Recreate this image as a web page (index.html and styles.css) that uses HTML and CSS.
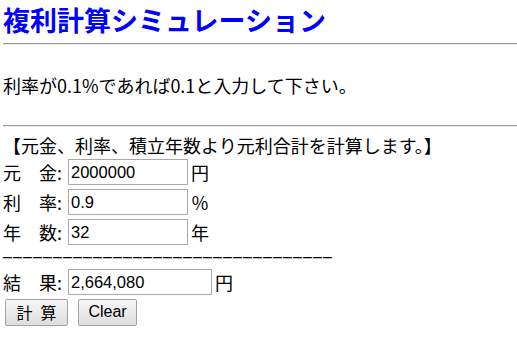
FILE: index.html
```html
<!DOCTYPE html>
<html lang="ja">

<head>
    <meta charset="UTF-8">
    <title>複利計算シミュレーション</title>
    <link rel="stylesheet" href="styles.css">
</head>

<body>

    <h2 class="title">複利計算シミュレーション</h2>
    <hr>

    <p class="note">利率が0.1%であれば0.1と入力して下さい。</p>
    <hr>

    <form id="calcForm" class="calc">
        <div class="intro">【元金、利率、積立年数より元利合計を計算します。】</div>

        <div class="row">
            <span class="label">元　金:</span>
            <input type="text" id="principal" class="field" value="2000000">
            <span class="unit">円</span>
        </div>
        <div class="row">
            <span class="label">利　率:</span>
            <input type="text" id="rate" class="field" value="0.9">
            <span class="unit">％</span>
        </div>
        <div class="row">
            <span class="label">年　数:</span>
            <input type="text" id="years" class="field" value="32">
            <span class="unit">年</span>
        </div>

        <div class="dashes">–––––––––––––––––––––––––––––––––</div>

        <div class="row">
            <span class="label">結　果:</span>
            <input type="text" id="result" class="field wide" value="2,664,080">
            <span class="unit">円</span>
        </div>

        <div class="row buttons">
            <button type="button" class="btn calc-btn" onclick="calculate()">計&ensp;算</button>
            <button type="reset" class="btn clear-btn">Clear</button>
        </div>
    </form>

    <script>
        function calculate() {
            const principal = parseFloat(document.getElementById('principal').value);
            const rate = parseFloat(document.getElementById('rate').value);
            const years = parseInt(document.getElementById('years').value, 10);

            const total = Math.round(principal * Math.pow(1 + rate / 100, years));
            document.getElementById('result').value = total.toLocaleString();
        }
    </script>

</body>

</html>
```

FILE: styles.css
```css
body {
    margin: 0 0 0 3px;
    font-family: "Noto Sans CJK JP", "Liberation Sans", sans-serif;
    font-size: 18px;
    color: #000;
    background: #fff;
}

.title {
    margin: 2px 0 0 0;
    font-size: 27px;
    line-height: 36px;
    font-weight: bold;
    color: #0000ff;
}

hr {
    margin: 5px 0 0 0;
    height: 0;
    border: none;
    border-top: 1px solid #9a9a9a;
    border-bottom: 1px solid #e8e8e8;
}

.note {
    margin: 27px 0 27px 0;
    line-height: 26px;
}

.note + hr {
    margin-top: 0;
}

.intro {
    margin-top: 6px;
    height: 24px;
    line-height: 24px;
}

.row {
    display: flex;
    align-items: center;
    height: 30px;
    white-space: nowrap;
}

.label {
    width: 65px;
}

.field {
    width: 120px;
    height: 26px;
    box-sizing: border-box;
    padding: 1px 2px;
    border: 1px solid #a9a9a9;
    font-family: "Liberation Sans", Arial, sans-serif;
    font-size: 16.5px;
    color: #000;
    outline: none;
}

.field.wide {
    width: 144px;
}

.unit {
    margin-left: 3px;
}

/* dashed separator line */
.dashes {
    height: 20px;
    line-height: 20px;
    font-family: "Liberation Sans", Arial, sans-serif;
    font-size: 16px;
    letter-spacing: 1.1px;
    white-space: nowrap;
}

.buttons {
    gap: 10px;
    padding-left: 2px;
}

.btn {
    height: 27px;
    box-sizing: border-box;
    padding: 0;
    border: 1px solid #a3a3a3;
    border-radius: 2px;
    background: linear-gradient(#f7f7f7, #dddddd);
    font-size: 16px;
    color: #000;
    cursor: pointer;
}

.calc-btn {
    width: 63px;
    font-family: "Noto Sans CJK JP", sans-serif;
}

.clear-btn {
    width: 59px;
    font-family: "Liberation Sans", Arial, sans-serif;
}
```
